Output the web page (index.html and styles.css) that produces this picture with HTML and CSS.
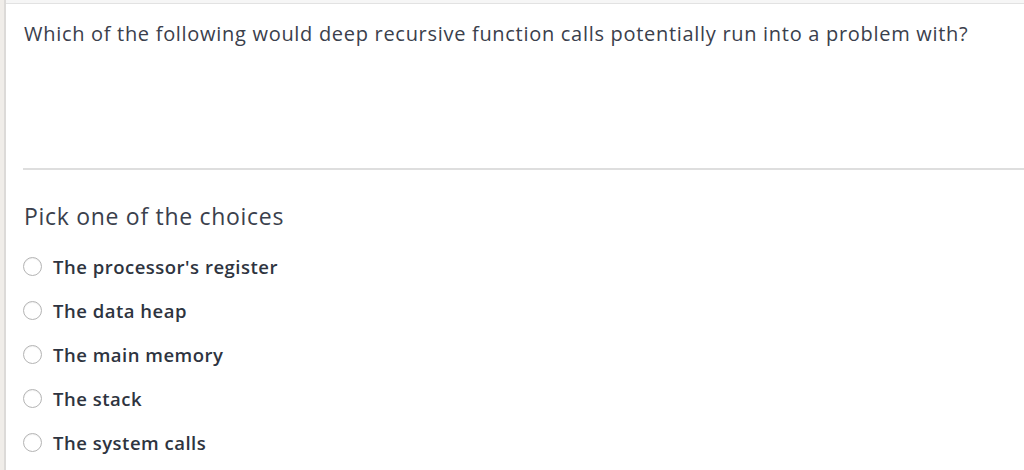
FILE: index.html
```html
<!DOCTYPE html>
<html>
<head>
<meta charset="utf-8">
<link rel="stylesheet" href="styles.css">
</head>
<body>
<div class="page">
  <div class="side"></div>
  <div class="main">
    <div class="question">
      <p class="qtext">Which of the following would deep recursive function calls potentially run into a problem with?</p>
    </div>
    <div class="answers">
      <p class="pick">Pick one of the choices</p>
      <ul class="choices">
        <li class="choice"><span class="radio"></span><span class="label">The processor's register</span></li>
        <li class="choice"><span class="radio"></span><span class="label">The data heap</span></li>
        <li class="choice"><span class="radio"></span><span class="label">The main memory</span></li>
        <li class="choice"><span class="radio"></span><span class="label">The stack</span></li>
        <li class="choice"><span class="radio"></span><span class="label">The system calls</span></li>
      </ul>
    </div>
  </div>
</div>
</body>
</html>
```
FILE: styles.css
```css
html, body {
  margin: 0;
  padding: 0;
  background: #ffffff;
  font-family: "Open Sans", Lato, sans-serif;
  color: #323844;
}
.page {
  display: flex;
  height: 470px;
  overflow: hidden;
}
.side {
  width: 4px;
  background: #f0ede9;
  border-right: 2px solid #dcdad8;
  flex: none;
}
.main {
  flex: 1;
  border-top: 3px solid #f6f6f6;
}
.main::before {
  content: "";
  display: block;
  height: 1px;
  background: #e2e2e2;
}
.question {
  margin-left: 17px;
  height: 164px;
  border-bottom: 2px solid #dedede;
}
.qtext {
  margin: 0;
  padding-top: 16px;
  padding-left: 1px;
  font-size: 20px;
  line-height: 28px;
  letter-spacing: 0.7px;
  color: #3a404c;
}
.answers {
  padding-left: 18px;
}
.pick {
  margin: 0;
  padding-top: 31px;
  font-size: 23px;
  line-height: 30px;
  letter-spacing: 0.7px;
  color: #3a404c;
}
.choices {
  list-style: none;
  margin: 0;
  padding: 0;
  padding-top: 25px;
}
.choice {
  display: flex;
  align-items: center;
  height: 44px;
  margin-top: -12px;
  margin-bottom: 12px;
}
.radio {
  width: 17px;
  height: 17px;
  border: 1px solid #b4b4b4;
  border-radius: 50%;
  flex: none;
  margin-left: -1px;
  margin-right: 11px;
  box-shadow: inset 0 1px 1px rgba(0, 0, 0, 0.06);
}
.label {
  font-size: 18.5px;
  font-weight: 600;
  letter-spacing: 0.5px;
  color: #2e3440;
}
```
